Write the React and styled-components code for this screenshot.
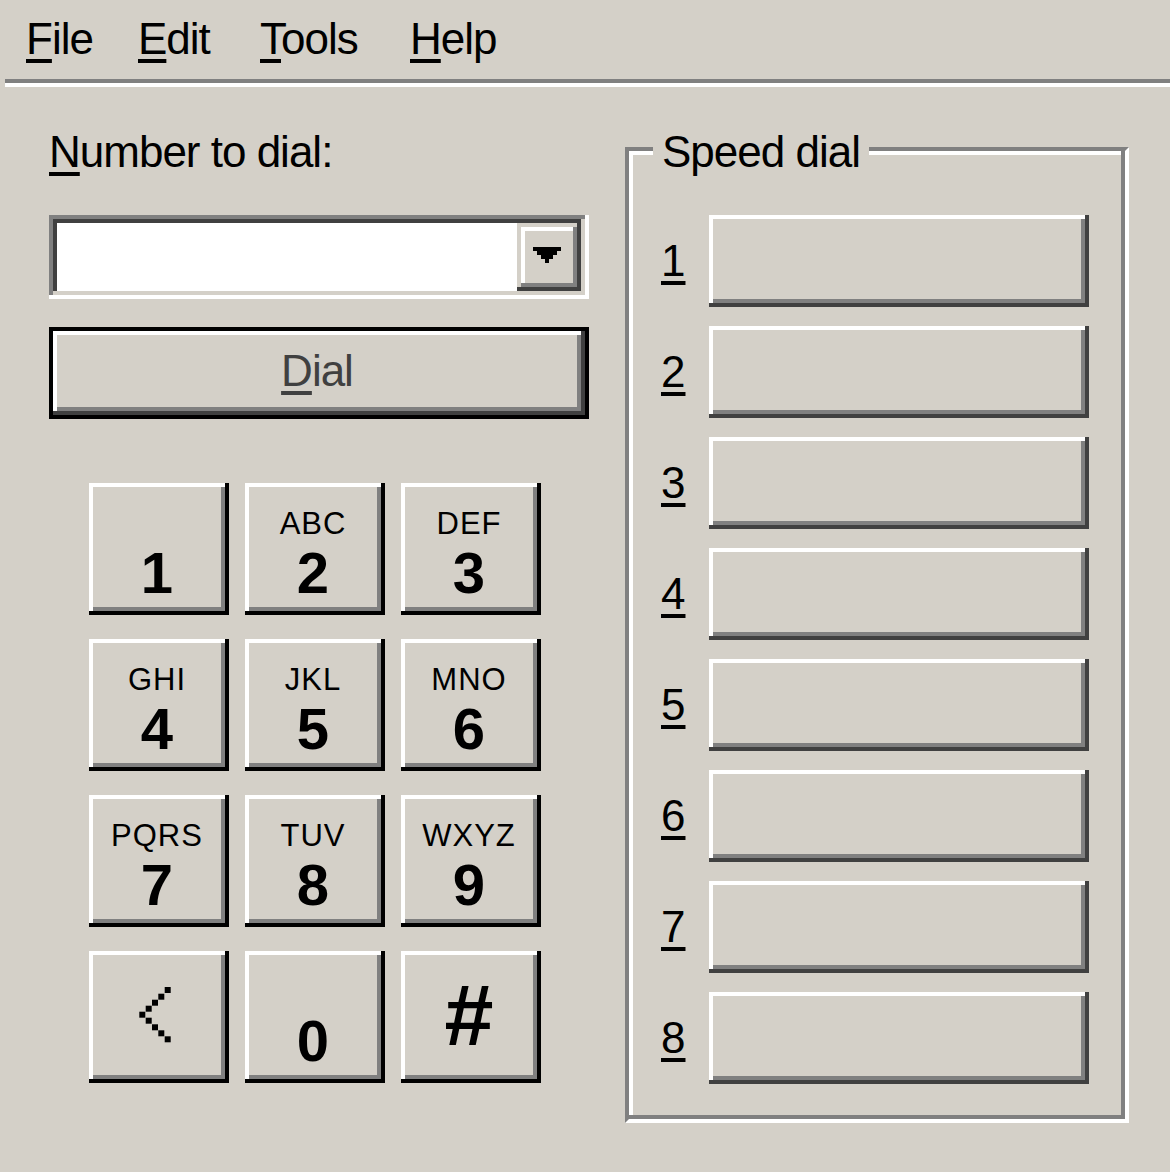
import React from 'react'
import styled, { createGlobalStyle } from 'styled-components'

const FACE = '#d4d0c8'

const GlobalStyle = createGlobalStyle`
  html, body {
    margin: 0;
    padding: 0;
    background: ${FACE};
  }
  body {
    width: 1170px;
    height: 1172px;
    overflow: hidden;
    font-family: "Liberation Sans", Arial, sans-serif;
    color: #000;
  }
`

const Window = styled.div`
  width: 1170px;
  height: 1172px;
  background: ${FACE};
`

const MenuBar = styled.div`
  display: grid;
  grid-template-columns: 112px 122px 150px auto;
  padding: 14px 0 15px 26px;
  font-size: 44px;
  line-height: 50px;
  letter-spacing: -1px;
`

const MenuItem = styled.span`
  white-space: nowrap;
`

const Hotkey = styled.u`
  text-decoration-thickness: 4px;
  text-underline-offset: 5px;
`

const Separator = styled.div`
  margin-left: 5px;
  border-top: 4px solid #808080;
  border-bottom: 4px solid #fff;
`

const Body = styled.div`
  display: flex;
  align-items: flex-start;
  padding-left: 49px;
`

const LeftColumn = styled.div`
  width: 540px;
  display: flex;
  flex-direction: column;
`

const Label = styled.div`
  margin-top: 40px;
  font-size: 44px;
  line-height: 50px;
  letter-spacing: -1px;
`

const Combo = styled.div`
  margin-top: 38px;
  height: 84px;
  box-sizing: border-box;
  padding: 8px;
  display: flex;
  box-shadow: inset -4px -4px 0 #fff, inset 4px 4px 0 #808080,
    inset -8px -8px 0 ${FACE}, inset 8px 8px 0 #404040;
`

const ComboField = styled.div`
  flex: 1;
  background: #fff;
`

const ComboButton = styled.div`
  width: 64px;
  box-sizing: border-box;
  padding: 0 4px 4px 0;
  display: flex;
  align-items: center;
  justify-content: center;
  background: ${FACE};
  box-shadow: inset -4px -4px 0 #404040, inset 4px 4px 0 ${FACE},
    inset -8px -8px 0 #808080, inset 8px 8px 0 #fff;
`

const DialButton = styled.button`
  margin: 28px 0 0;
  height: 92px;
  box-sizing: border-box;
  border: 4px solid #000;
  padding: 0 4px 4px 0;
  background: ${FACE};
  box-shadow: inset -4px -4px 0 #404040, inset 4px 4px 0 #fff,
    inset -8px -8px 0 #808080;
  font-family: inherit;
  font-size: 44px;
  line-height: 50px;
  letter-spacing: -1px;
  color: #404040;
`

const Keypad = styled.div`
  margin: 64px 0 0 40px;
  display: grid;
  grid-template-columns: repeat(3, 140px);
  grid-auto-rows: 132px;
  column-gap: 16px;
  row-gap: 24px;
`

const Key = styled.button`
  margin: 0;
  border: 0;
  box-sizing: border-box;
  padding: ${(p) => (p.$centered ? '0 4px 4px 0' : '25px 4px 0 0')};
  display: flex;
  flex-direction: column;
  align-items: center;
  justify-content: ${(p) => (p.$centered ? 'center' : 'flex-start')};
  background: ${FACE};
  box-shadow: inset -4px -4px 0 #000, inset 4px 4px 0 #fff,
    inset -8px -8px 0 #808080;
  font-family: inherit;
  color: #000;
`

const KeyLetters = styled.span`
  height: 32px;
  font-size: 31px;
  line-height: 32px;
  letter-spacing: 1px;
`

const KeyDigit = styled.span`
  margin-top: 4px;
  font-size: 58px;
  line-height: 58px;
  font-weight: bold;
`

const KeySymbol = styled.span`
  font-size: 88px;
  line-height: 88px;
  font-weight: bold;
`

const BackIcon = styled.svg`
  margin-right: 4px;
  display: block;
`

const GroupBox = styled.div`
  position: relative;
  margin: 60px 0 0 36px;
  width: 504px;
  height: 976px;
  box-sizing: border-box;
  border-style: solid;
  border-width: 4px;
  border-color: #808080 #fff #fff #808080;
  box-shadow: inset -4px -4px 0 #808080, inset 4px 4px 0 #fff;
  padding: 64px 0 0 32px;
`

const GroupTitle = styled.span`
  position: absolute;
  top: -24px;
  left: 24px;
  padding: 0 9px;
  background: ${FACE};
  font-size: 44px;
  line-height: 50px;
  letter-spacing: -1px;
  white-space: nowrap;
`

const SpeedList = styled.div`
  display: flex;
  flex-direction: column;
  gap: 19px;
`

const SpeedRow = styled.div`
  display: flex;
  align-items: center;
  height: 92px;
`

const SpeedLabel = styled.span`
  width: 48px;
  font-size: 44px;
  line-height: 50px;
`

const SpeedButton = styled.div`
  width: 380px;
  height: 92px;
  background: ${FACE};
  box-shadow: inset -4px -4px 0 #404040, inset 4px 4px 0 #fff,
    inset -8px -8px 0 #808080;
`

const menus = ['File', 'Edit', 'Tools', 'Help']

const keys = [
  { d: '1', l: '' },
  { d: '2', l: 'ABC' },
  { d: '3', l: 'DEF' },
  { d: '4', l: 'GHI' },
  { d: '5', l: 'JKL' },
  { d: '6', l: 'MNO' },
  { d: '7', l: 'PQRS' },
  { d: '8', l: 'TUV' },
  { d: '9', l: 'WXYZ' },
  { kind: 'back' },
  { d: '0', l: '' },
  { kind: 'hash' },
]

const chevron = [
  [28.7, 3], [22.3, 9.7], [16, 15.7], [9.7, 21.7], [3.3, 27.7],
  [9.7, 33.7], [16, 40.3], [22.3, 46.3], [28.7, 52.3],
]

const WithHotkey = ({ text }) => (
  <>
    <Hotkey>{text[0]}</Hotkey>
    {text.slice(1)}
  </>
)

const KeypadKey = ({ k }) => {
  if (k.kind === 'back')
    return (
      <Key $centered>
        <BackIcon width="32" height="56" viewBox="0 0 32 56">
          {chevron.map(([x, y], i) => (
            <rect key={i} x={x - 3} y={y - 3} width="6" height="6" fill="#000" />
          ))}
        </BackIcon>
      </Key>
    )
  if (k.kind === 'hash')
    return (
      <Key $centered>
        <KeySymbol>#</KeySymbol>
      </Key>
    )
  return (
    <Key>
      <KeyLetters>{k.l}</KeyLetters>
      <KeyDigit>{k.d}</KeyDigit>
    </Key>
  )
}

export default function App() {
  return (
    <Window>
      <GlobalStyle />
      <MenuBar>
        {menus.map((m) => (
          <MenuItem key={m}>
            <WithHotkey text={m} />
          </MenuItem>
        ))}
      </MenuBar>
      <Separator />
      <Body>
        <LeftColumn>
          <Label>
            <WithHotkey text="Number to dial:" />
          </Label>
          <Combo>
            <ComboField />
            <ComboButton>
              <svg width="28" height="16" viewBox="0 0 28 16">
                <path d="M0 0H28V4H24V8H20V12H16V16H12V12H8V8H4V4H0Z" fill="#000" />
              </svg>
            </ComboButton>
          </Combo>
          <DialButton>
            <WithHotkey text="Dial" />
          </DialButton>
          <Keypad>
            {keys.map((k, i) => (
              <KeypadKey key={i} k={k} />
            ))}
          </Keypad>
        </LeftColumn>
        <GroupBox>
          <GroupTitle>Speed dial</GroupTitle>
          <SpeedList>
            {[1, 2, 3, 4, 5, 6, 7, 8].map((n) => (
              <SpeedRow key={n}>
                <SpeedLabel>
                  <Hotkey>{n}</Hotkey>
                </SpeedLabel>
                <SpeedButton />
              </SpeedRow>
            ))}
          </SpeedList>
        </GroupBox>
      </Body>
    </Window>
  )
}
